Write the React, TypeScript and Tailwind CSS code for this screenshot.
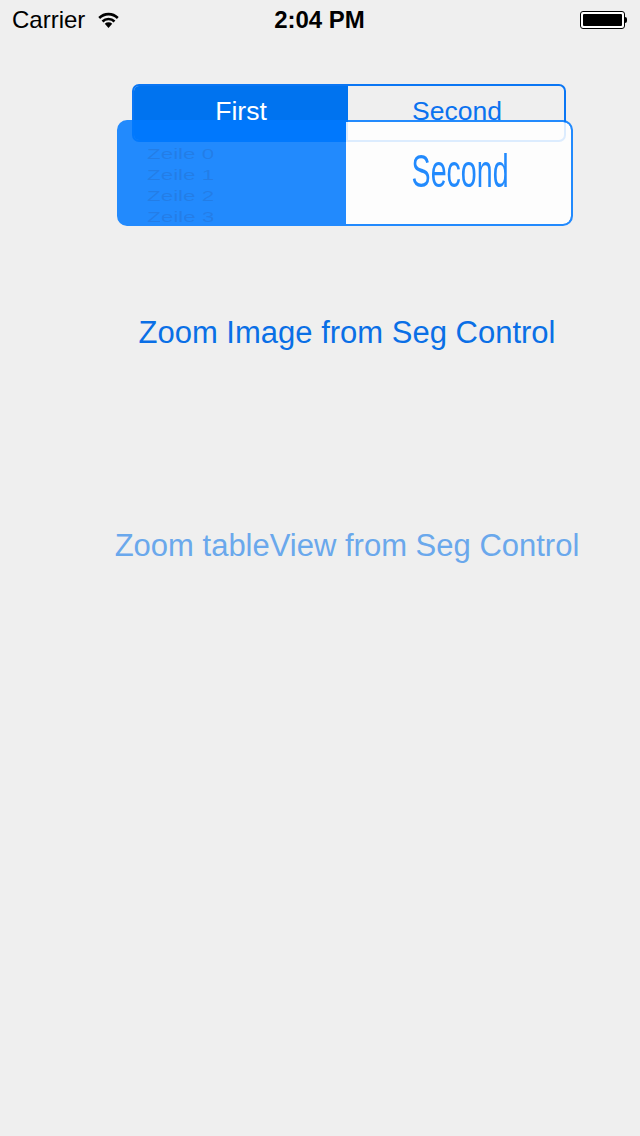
import { useState } from "react"

const StatusBar = () => {
	return (
		<div className="h-10 flex flex-row items-center justify-between pl-3 pr-[13px] text-black text-[24px]">
			<div className="flex flex-row items-center gap-[12px] w-[200px]">
				<span>Carrier</span>
				{/* wifi */}
				<svg width="23" height="18" viewBox="0 0 23 18" className="mb-[2px]">
					<path d="M11.5 18 L7.8 13.8 A5.4 5.4 0 0 1 15.2 13.8 Z" fill="#000" />
					<path d="M4.6 10.6 A9.6 9.6 0 0 1 18.4 10.6 L16.6 12.5 A7 7 0 0 0 6.4 12.5 Z" fill="#000" />
					<path d="M1.3 7.1 A14.2 14.2 0 0 1 21.7 7.1 L19.9 9 A11.6 11.6 0 0 0 3.1 9 Z" fill="#000" />
				</svg>
			</div>
			<span className="font-bold">2:04 PM</span>
			<div className="w-[200px] flex flex-row justify-end items-center">
				<div className="w-[45px] h-[18px] border border-black rounded-[3px] p-[2px] bg-white">
					<div className="w-full h-full bg-black rounded-[1px]" />
				</div>
				<div className="w-[2px] h-[6px] bg-black rounded-r-sm" />
			</div>
		</div>
	)
}

const App = () => {
	const [seg, setSeg] = useState(0)
	return (
		<div className="w-[640px] h-[1136px] bg-[#efefef] overflow-hidden" style={{ fontFamily: '"Liberation Sans", Arial, sans-serif' }}>
			<StatusBar />
			<div className="relative pl-[132px] pt-[44px]">
				{/* the segmented control */}
				<div className="w-[434px] h-[58px] flex flex-row rounded-[7px] border-2 border-[#0a76f4] overflow-hidden text-[26.5px]">
					<button onClick={() => setSeg(0)} className="flex-1 bg-[#0073ef] text-white flex items-center justify-center pb-[3px]">First</button>
					<button onClick={() => setSeg(1)} className="flex-1 text-[#0a72ef] flex items-center justify-center pb-[3px] pl-[2px]">Second</button>
				</div>
				{/* zoomed snapshot lying over the control */}
				<div className="absolute left-[117px] top-[80px] w-[456px] h-[106px] rounded-[10px] border-2 border-[#007aff] bg-[#007aff] opacity-[0.86] flex flex-row overflow-hidden">
					<div className="w-[227px] flex flex-col pl-[28px] pt-[24px] gap-[5px] text-[14px] text-[#0a3f9a]/25 leading-[16px]">
						<span className="origin-left scale-x-[1.6]">Zeile 0</span>
						<span className="origin-left scale-x-[1.6]">Zeile 1</span>
						<span className="origin-left scale-x-[1.6]">Zeile 2</span>
						<span className="origin-left scale-x-[1.6]">Zeile 3</span>
					</div>
					<div className="flex-1 bg-white rounded-r-[8px] flex items-center justify-center pl-[4px]">
						<span className="text-[#007aff] text-[26px] scale-y-[1.75] scale-x-[1.1] pb-[2px]">Second</span>
					</div>
				</div>
			</div>
			<div className="flex flex-col items-center pl-[54px]">
				<button className="mt-[168px] text-[31px] text-[#0a6fe6]">Zoom Image from Seg Control</button>
				<button className="mt-[166px] text-[31px] text-[#6aa8ec]">Zoom tableView from Seg Control</button>
			</div>
			<span className="hidden">{seg}</span>
		</div>
	)
}
export default App
